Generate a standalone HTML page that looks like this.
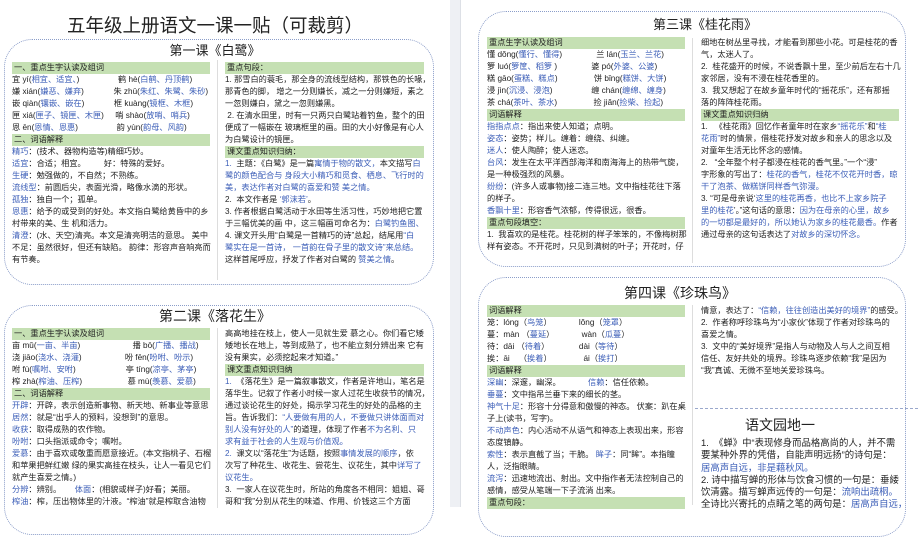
<!DOCTYPE html>
<html><head><meta charset="utf-8"><style>
*{margin:0;padding:0;box-sizing:border-box}
body{width:918px;height:507px;overflow:hidden;background:#fff;font-family:"Liberation Sans","Noto Sans CJK SC",sans-serif;color:#222;position:relative}
.strip{position:absolute;left:450px;top:0;width:11px;height:507px;background:#eef0f4;border-right:1px solid #dde0e6}
.box{position:absolute;border:1.5px dotted #8b9dc9;border-radius:28px}
.t{position:absolute;white-space:nowrap;text-align:center;color:#222}
.c{position:absolute;font-size:8.2px;line-height:12px;white-space:nowrap}
.c div{height:12px}
.g{background:#c5e0b3;padding-left:2px}
.b{color:#3d5fb8}
.vl{position:absolute;width:1px;background:#ddd}
</style></head><body>
<div class="strip"></div>

<div class="t" style="left:60px;top:13px;width:310px;font-size:18.5px;line-height:25px">五年级上册语文一课一贴（可裁剪）</div>

<div class="box" style="left:4px;top:39px;width:430px;height:246px"></div>
<div class="t" style="left:150px;top:42px;width:130px;font-size:13px;line-height:17px">第一课《白鹭》</div>
<div class="vl" style="left:217px;top:60px;height:220px"></div>
<div class="c" style="left:12px;top:62px;width:198px">
<div class="g">一、重点生字认读及组词</div>
<div>宜 yí(<span class="b">相宜、适宜、</span>)&nbsp;&nbsp;&nbsp;&nbsp;&nbsp;&nbsp;&nbsp;&nbsp;&nbsp;&nbsp;&nbsp;&nbsp;&nbsp;&nbsp;&nbsp;&nbsp;&nbsp;鹤 hè(<span class="b">白鹤、丹顶鹤</span>)</div>
<div>嫌 xián(<span class="b">嫌恶、嫌弃</span>)&nbsp;&nbsp;&nbsp;&nbsp;&nbsp;&nbsp;&nbsp;&nbsp;&nbsp;&nbsp;&nbsp;&nbsp;&nbsp;朱 zhū(<span class="b">朱红、朱鹭、朱砂</span>)</div>
<div>嵌 qiàn(<span class="b">镶嵌、嵌在</span>)&nbsp;&nbsp;&nbsp;&nbsp;&nbsp;&nbsp;&nbsp;&nbsp;&nbsp;&nbsp;&nbsp;&nbsp;&nbsp;框 kuàng(<span class="b">镜框、木框</span>)</div>
<div>匣 xiá(<span class="b">匣子、镜匣、木匣</span>)&nbsp;&nbsp;&nbsp;&nbsp;&nbsp;哨 shào(<span class="b">放哨、哨兵</span>)</div>
<div>恩 ēn(<span class="b">恩情、恩惠</span>)&nbsp;&nbsp;&nbsp;&nbsp;&nbsp;&nbsp;&nbsp;&nbsp;&nbsp;&nbsp;&nbsp;&nbsp;&nbsp;&nbsp;&nbsp;&nbsp;&nbsp;韵 yùn(<span class="b">韵母、风韵</span>)</div>
<div class="g">二、词语解释</div>
<div><span class="b">精巧</span>：(技术、器物构造等)精细巧妙。</div>
<div><span class="b">适宜</span>：合适；相宜。&nbsp;&nbsp;&nbsp;&nbsp;&nbsp;&nbsp;&nbsp;&nbsp;好：特殊的爱好。</div>
<div><span class="b">生硬</span>：勉强做的，不自然；不熟练。</div>
<div><span class="b">流线型</span>：前圆后尖，表面光滑，略像水滴的形状。</div>
<div><span class="b">孤独</span>：独自一个；孤单。</div>
<div><span class="b">恩惠</span>：给予的或受到的好处。本文指白鹭给黄昏中的乡</div>
<div>村带来的美、生 机和活力。</div>
<div><span class="b">清澄</span>：(水、天空)清亮。本文是清亮明洁的意思。 美中</div>
<div>不足：虽然很好，但还有缺陷。 韵律：形容声音响亮而</div>
<div>有节奏。</div>
</div>
<div class="c" style="left:225px;top:62px;width:199px">
<div class="g">重点句段：</div>
<div>1. 那雪白的蓑毛，那全身的流线型结构，那铁色的长喙，</div>
<div>那青色的脚， 增之一分则嫌长，减之一分则嫌短，素之</div>
<div>一忽则嫌白，黛之一忽则嫌黑。</div>
<div>&nbsp;2. 在清水田里，时有一只两只白鹭站着钓鱼，整个的田</div>
<div>便成了一幅嵌在 玻璃框里的画。田的大小好像是有心人</div>
<div>为白鹭设计的镜匣。</div>
<div class="g">课文重点知识归纳：</div>
<div class="b">1.&nbsp;&nbsp;<span style="color:#222">主题：《白鹭》是一篇</span>寓情于物的散文，<span style="color:#222">本文描写</span>白</div>
<div class="b">鹭的颜色配合与 身段大小精巧和觅食、栖息、飞行时的</div>
<div class="b">美，表达作者对白鹭的喜爱和赞 美之情。</div>
<div>2.&nbsp;&nbsp;本文作者是 <span class="b">‘郭沫若’</span>。</div>
<div>3. 作者根据白鹭活动于水田等生活习性，巧妙地把它置</div>
<div>于三幅优美的画 中，这三幅画可命名为：<span class="b">白鹭钓鱼图、</span></div>
<div>4. 课文开头用“白鹭是一首精巧的诗”总起，结尾用<span class="b">“白</span></div>
<div class="b">鹭实在是一首诗， 一首韵在骨子里的散文诗”来总结。</div>
<div>这样首尾呼应，抒发了作者对白鹭的 <span class="b">赞美之情</span>。</div>
</div>

<div class="box" style="left:4px;top:305px;width:430px;height:230px"></div>
<div class="t" style="left:140px;top:307px;width:150px;font-size:14px;line-height:19px">第二课《落花生》</div>
<div class="vl" style="left:217px;top:328px;height:180px"></div>
<div class="c" style="left:12px;top:328px;width:198px">
<div class="g">一、重点生字认读及组词</div>
<div>亩 mǔ(<span class="b">一亩、半亩</span>)&nbsp;&nbsp;&nbsp;&nbsp;&nbsp;&nbsp;&nbsp;&nbsp;&nbsp;&nbsp;&nbsp;&nbsp;&nbsp;&nbsp;&nbsp;&nbsp;&nbsp;&nbsp;&nbsp;&nbsp;&nbsp;&nbsp;&nbsp;播 bō(<span class="b">广播、播战</span>)</div>
<div>浇 jiāo(<span class="b">浇水、浇灌</span>)&nbsp;&nbsp;&nbsp;&nbsp;&nbsp;&nbsp;&nbsp;&nbsp;&nbsp;&nbsp;&nbsp;&nbsp;&nbsp;&nbsp;&nbsp;&nbsp;&nbsp;&nbsp;&nbsp;吩 fēn(<span class="b">吩咐、吩示</span>)</div>
<div>咐 fù(<span class="b">嘱咐、安咐</span>)&nbsp;&nbsp;&nbsp;&nbsp;&nbsp;&nbsp;&nbsp;&nbsp;&nbsp;&nbsp;&nbsp;&nbsp;&nbsp;&nbsp;&nbsp;&nbsp;&nbsp;&nbsp;&nbsp;&nbsp;&nbsp;&nbsp;亭 tíng(<span class="b">凉亭、茅亭</span>)</div>
<div>榨 zhà(<span class="b">榨油、压榨</span>)&nbsp;&nbsp;&nbsp;&nbsp;&nbsp;&nbsp;&nbsp;&nbsp;&nbsp;&nbsp;&nbsp;&nbsp;&nbsp;&nbsp;&nbsp;&nbsp;&nbsp;&nbsp;&nbsp;&nbsp;慕 mù(<span class="b">羡慕、爱慕</span>)</div>
<div class="g">二、词语解释</div>
<div><span class="b">开辟</span>：开辟，表示创造新事物、新天地、新事业等意思</div>
<div><span class="b">居然</span>：就是“出乎人的预料，没想到”的意思。</div>
<div><span class="b">收获</span>：取得成熟的农作物。</div>
<div><span class="b">吩咐</span>：口头指派或命令；嘱咐。</div>
<div><span class="b">爱慕</span>：由于喜欢或敬重而愿意接近。(本文指桃子、石榴</div>
<div>和苹果把鲜红嫩 绿的果实高挂在枝头，让人一看见它们</div>
<div>就产生喜爱之情。)</div>
<div><span class="b">分辨</span>：辨别。&nbsp;&nbsp;&nbsp;&nbsp;&nbsp;&nbsp;<span class="b">体面</span>：(相貌或样子)好看；美丽。</div>
<div><span class="b">榨油</span>：榨，压出物体里的汁液。“榨油”就是榨取含油物</div>
</div>
<div class="c" style="left:225px;top:328px;width:199px">
<div>高高地挂在枝上，使人一见就生爱 慕之心。你们看它矮</div>
<div>矮地长在地上，等到成熟了，也不能立刻分辨出来 它有</div>
<div>没有果实，必须挖起来才知道。”</div>
<div class="g">课文重点知识归纳</div>
<div><span class="b">1.</span>&nbsp;&nbsp;《落花生》是一篇叙事散文，作者是许地山，笔名是</div>
<div>落华生。记叙了作者小时候一家人过花生收获节的情况，</div>
<div>通过谈论花生的好处，揭示学习花生的好处的品格的主</div>
<div>旨。告诉我们：<span class="b">“人要做有用的人，不要做只讲体面而对</span></div>
<div><span class="b">别人没有好处的人”</span>的道理，体现了作者<span class="b">不为名利、只</span></div>
<div class="b">求有益于社会的人生观与价值观。</div>
<div><span class="b">2.</span>&nbsp;&nbsp;课文以“落花生”为话题，按照<span class="b">事情发展的顺序</span>，依</div>
<div>次写了种花生、收花生、尝花生、议花生，其中<span class="b">详写了</span></div>
<div class="b">议花生。</div>
<div>3.&nbsp;&nbsp;一家人在议花生时，所站的角度各不相同：姐姐、哥</div>
<div>哥和“我”分别从花生的味道、作用、价钱这三个方面</div>
</div>

<!-- right page -->
<div class="box" style="left:478px;top:11px;width:428px;height:256px"></div>
<div class="t" style="left:640px;top:16px;width:130px;font-size:13px;line-height:18px">第三课《桂花雨》</div>
<div class="vl" style="left:692px;top:38px;height:225px"></div>
<div class="c" style="left:487px;top:37px;width:198px">
<div class="g">重点生字认读及组词</div>
<div>懂 dǒng(<span class="b">懂行、懂得</span>)&nbsp;&nbsp;&nbsp;&nbsp;&nbsp;&nbsp;&nbsp;&nbsp;&nbsp;&nbsp;&nbsp;&nbsp;&nbsp;&nbsp;&nbsp;兰 lán(<span class="b">玉兰、兰花</span>)</div>
<div>箩 luó(<span class="b">箩筐、稻箩 </span>)&nbsp;&nbsp;&nbsp;&nbsp;&nbsp;&nbsp;&nbsp;&nbsp;&nbsp;&nbsp;&nbsp;&nbsp;&nbsp;&nbsp;&nbsp;婆 pó(<span class="b">外婆、公婆</span>)</div>
<div>糕 gāo(<span class="b">蛋糕、糕点</span>)&nbsp;&nbsp;&nbsp;&nbsp;&nbsp;&nbsp;&nbsp;&nbsp;&nbsp;&nbsp;&nbsp;&nbsp;&nbsp;&nbsp;&nbsp;&nbsp;饼 bǐng(<span class="b">糕饼、大饼</span>)</div>
<div>浸 jìn(<span class="b">沉浸、浸泡</span>)&nbsp;&nbsp;&nbsp;&nbsp;&nbsp;&nbsp;&nbsp;&nbsp;&nbsp;&nbsp;&nbsp;&nbsp;&nbsp;&nbsp;&nbsp;&nbsp;&nbsp;缠 chán(<span class="b">缠绵、缠身</span>)</div>
<div>茶 chá(<span class="b">茶叶、茶水</span>)&nbsp;&nbsp;&nbsp;&nbsp;&nbsp;&nbsp;&nbsp;&nbsp;&nbsp;&nbsp;&nbsp;&nbsp;&nbsp;&nbsp;&nbsp;&nbsp;捡 jiǎn(<span class="b">捡柴、捡起</span>)</div>
<div class="g">词语解释</div>
<div><span class="b">指指点点</span>：指出来使人知道；点明。</div>
<div><span class="b">姿态</span>：姿势；样儿。缠着：缠绕、纠缠。</div>
<div><span class="b">迷人</span>：使人陶醉；使人迷恋。</div>
<div><span class="b">台风</span>：发生在太平洋西部海洋和南海海上的热带气旋，</div>
<div>是一种极强烈的风暴。</div>
<div><span class="b">纷纷</span>：(许多人或事物)接二连三地。文中指桂花往下落</div>
<div>的样子。</div>
<div><span class="b">香飘十里</span>：形容香气浓郁，传得很远，很香。</div>
<div class="g">重点句段填空：</div>
<div>1.&nbsp;&nbsp;我喜欢的是桂花。桂花树的样子笨笨的，不像梅树那</div>
<div>样有姿态。不开花时，只见到满树的叶子；开花时，仔</div>
</div>
<div class="c" style="left:701px;top:37px;width:198px">
<div>细地在树丛里寻找，才能看到那些小花。可是桂花的香</div>
<div>气，太迷人了。</div>
<div>2.&nbsp;&nbsp;桂花盛开的时候，不说香飘十里，至少前后左右十几</div>
<div>家邻居，没有不浸在桂花香里的。</div>
<div>3.&nbsp;&nbsp;我又想起了在故乡童年时代的“摇花乐”，还有那摇</div>
<div>落的阵阵桂花雨。</div>
<div class="g">课文重点知识归纳</div>
<div>1.&nbsp;&nbsp;&nbsp;《桂花雨》回忆作者童年时在家乡<span class="b">“摇花乐”</span>和<span class="b">“桂</span></div>
<div><span class="b">花雨”</span>时的情景，借桂花抒发对故乡和亲人的思念以及</div>
<div>对童年生活无比怀念的感情。</div>
<div>2.&nbsp;&nbsp;&nbsp;“全年整个村子都浸在桂花的香气里。”一个“浸”</div>
<div>字形象的写出了：<span class="b">桂花的香气，桂花不仅花开时香，晾</span></div>
<div class="b">干了泡茶、做糕饼同样香气弥漫。</div>
<div>3.&nbsp;“可是母亲说‘<span class="b">这里的桂花再香，也比不上家乡院子</span></div>
<div><span class="b">里的桂花</span>’。”这句话的意思：<span class="b">因为在母亲的心里，故乡</span></div>
<div><span class="b">的一切都是最好的，所以她认为家乡的桂花最香。</span>作者</div>
<div>通过母亲的这句话表达了<span class="b">对故乡的深切怀念。</span></div>
</div>

<div class="box" style="left:478px;top:277px;width:428px;height:260px"></div>
<div class="t" style="left:605px;top:284px;width:150px;font-size:14px;line-height:19px">第四课《珍珠鸟》</div>
<div class="vl" style="left:692px;top:305px;height:200px"></div>
<div class="c" style="left:487px;top:305px;width:198px">
<div class="g">词语解释</div>
<div>笼：lóng（<span class="b">鸟笼</span>）&nbsp;&nbsp;&nbsp;&nbsp;&nbsp;&nbsp;&nbsp;&nbsp;&nbsp;&nbsp;&nbsp;&nbsp;lǒng（<span class="b">笼罩</span>）</div>
<div>蔓：màn （<span class="b">蔓延</span>）&nbsp;&nbsp;&nbsp;&nbsp;&nbsp;&nbsp;&nbsp;&nbsp;&nbsp;&nbsp;&nbsp;&nbsp;wàn（<span class="b">瓜蔓</span>）</div>
<div>待：dāi （<span class="b">待着</span>）&nbsp;&nbsp;&nbsp;&nbsp;&nbsp;&nbsp;&nbsp;&nbsp;&nbsp;&nbsp;&nbsp;&nbsp;&nbsp;dài（<span class="b">等待</span>）</div>
<div>挨：āi&nbsp;&nbsp;&nbsp;&nbsp;（<span class="b">挨着</span>）&nbsp;&nbsp;&nbsp;&nbsp;&nbsp;&nbsp;&nbsp;&nbsp;&nbsp;&nbsp;&nbsp;&nbsp;&nbsp;&nbsp;ái（<span class="b">挨打</span>）</div>
<div class="g">词语解释</div>
<div><span class="b">深幽</span>：深邃，幽深。&nbsp;&nbsp;&nbsp;&nbsp;&nbsp;&nbsp;&nbsp;&nbsp;&nbsp;&nbsp;&nbsp;&nbsp;<span class="b">信赖</span>：信任依赖。</div>
<div><span class="b">垂蔓</span>：文中指吊兰垂下来的细长的茎。</div>
<div><span class="b">神气十足</span>：形容十分得意和傲慢的神态。 伏案：趴在桌</div>
<div>子上(读书，写字)。</div>
<div><span class="b">不动声色</span>：内心活动不从语气和神态上表现出来，形容</div>
<div>态度镇静。</div>
<div><span class="b">索性</span>：表示直截了当；干脆。 <span class="b">眸子</span>：同“眸”。本指瞳</div>
<div>人，泛指眼睛。</div>
<div><span class="b">流泻</span>：迅速地流出、射出。文中指作者无法控制自己的</div>
<div>感情，感受从笔端一下子流淌 出来。</div>
<div class="g">重点句段：</div>
</div>
<div class="c" style="left:701px;top:305px;width:198px">
<div>情意，表达了：<span class="b">“信赖，往往创造出美好的境界”</span>的感受。</div>
<div>2.&nbsp;&nbsp;作者称呼珍珠鸟为“小家伙”体现了作者对珍珠鸟的</div>
<div>喜爱之情。</div>
<div>3.&nbsp;&nbsp;文中的“美好境界”是指人与动物及人与人之间互相</div>
<div>信任、友好共处的境界。珍珠鸟逐步依赖“我”是因为</div>
<div>“我”真诚、无微不至地关爱珍珠鸟。</div>
</div>
<div style="position:absolute;left:695px;top:408px;width:223px;border-top:1px dashed #9aa8cc"></div>
<div class="t" style="left:730px;top:416px;width:100px;font-size:14px;line-height:19px">语文园地一</div>
<div class="c" style="left:701px;top:437px;width:205px;font-size:9.4px;line-height:12.3px">
<div style="height:12.3px">1.&nbsp;&nbsp;《蝉》中“表现修身而品格高尚的人，并不需</div>
<div style="height:12.3px">要某种外界的凭借，自能声明远扬”的诗句是：</div>
<div style="height:12.3px" class="b">居高声自远，非是藉秋风。</div>
<div style="height:12.3px">2. 诗中描写蝉的形体与饮食习惯的一句是：垂緌</div>
<div style="height:12.3px">饮清露。描写蝉声远传的一句是：<span class="b">流响出疏桐。</span></div>
<div style="height:12.3px">全诗比兴寄托的点睛之笔的两句是：<span class="b">居高声自远，</span></div>
</div>
</body></html>
